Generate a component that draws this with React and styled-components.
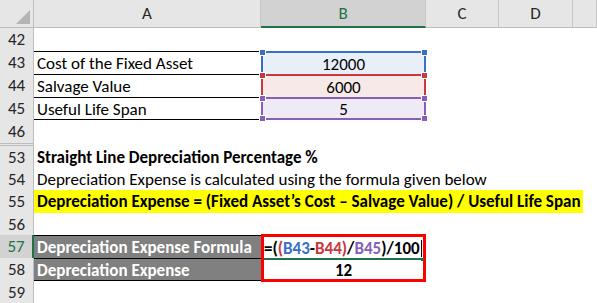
import React from 'react';
import styled, { createGlobalStyle, css } from 'styled-components';

const GlobalStyle = createGlobalStyle`
  html, body { margin: 0; padding: 0; background: #fff; }
  body { font-family: Carlito, Lato, "Open Sans", sans-serif; }
`;

const GREEN = '#217346';

const tones = {
  blue: { line: '#3a6fc4', fill: '#e9eff8' },
  red: { line: '#c8383d', fill: '#f8e9e9' },
  purple: { line: '#8660b8', fill: '#efebf6' },
};

const Sheet = styled.div`
  display: grid;
  grid-template-columns: 34px 227px 165px 73px 74px 1fr;
  grid-template-rows: 28px repeat(5, 23px) 3px 22px 22px 23px 22px 23px 23px 22px;
  width: 597px;
  height: 303px;
  overflow: hidden;
  font-size: 17px;
  color: #000;
`;

const Corner = styled.div`
  background: #e6e6e6;
  border-right: 1px solid #bdbdbd;
  border-bottom: 1px solid #bdbdbd;
  display: flex;
  align-items: flex-end;
  justify-content: flex-end;
  padding: 0 3px 3px 0;
`;

const ColHead = styled.div`
  background: #e6e6e6;
  border-right: 1px solid #c8c8c8;
  border-bottom: 1px solid #bdbdbd;
  display: flex;
  align-items: center;
  justify-content: center;
  color: #262626;
  ${(p) =>
    p.selected &&
    css`
      background: #d2d2d2;
      color: ${GREEN};
      border-bottom: 2px solid ${GREEN};
    `}
`;

const RowHead = styled.div`
  grid-column: 1;
  background: #e6e6e6;
  border-right: 1px solid #bdbdbd;
  display: flex;
  align-items: center;
  justify-content: center;
  color: #262626;
  ${(p) =>
    p.selected &&
    css`
      background: #d2d2d2;
      color: ${GREEN};
      border-right: 2px solid ${GREEN};
    `}
  ${(p) =>
    p.hidden &&
    css`
      border-top: 1px solid #bdbdbd;
      border-bottom: 1px solid #bdbdbd;
    `}
`;

const Blank = styled.div`
  grid-column: ${(p) => p.from || 2} / -1;
`;

const TextCell = styled.div`
  grid-column: 2 / -1;
  display: flex;
  align-items: center;
  padding: 1px 0 0 3px;
  white-space: nowrap;
  font-weight: ${(p) => (p.bold ? 700 : 400)};
`;

const Highlight = styled.span`
  flex-shrink: 0;
  background: #ffff00;
  align-self: stretch;
  display: flex;
  align-items: center;
  margin-left: -3px;
  padding: 0 2px 0 3px;
  margin-top: -1px;
`;

const Label = styled.div`
  grid-column: 2;
  display: flex;
  align-items: center;
  padding: 1px 0 0 3px;
  white-space: nowrap;
  border-top: 1px solid #000;
  margin-right: 2px;
  ${(p) => p.last && css`border-bottom: 1px solid #000;`}
`;

const DarkLabel = styled(Label)`
  background: #808080;
  color: #fff;
  font-weight: 700;
  margin-right: 0;
`;

const DataCell = styled.div`
  grid-column: 3;
  position: relative;
  display: flex;
  align-items: center;
  justify-content: center;
  padding-top: 1px;
  background: ${(p) => tones[p.tone].fill};
  border: 2px solid ${(p) => tones[p.tone].line};
  border-bottom: ${(p) => (p.last ? `2px solid ${tones[p.tone].line}` : 'none')};
`;

const Handle = styled.span`
  position: absolute;
  width: 5px;
  height: 5px;
  border: 1px solid #fff;
  background: ${(p) => tones[p.tone].line};
  ${(p) => (p.bottom ? 'bottom: -4px;' : 'top: -4px;')}
  ${(p) => (p.right ? 'right: -4px;' : 'left: -4px;')}
`;

const ResultBox = styled.div`
  grid-column: 3;
  grid-row: span 2;
  margin: -1px 0 -1px 0;
  border: 3px solid #ff0000;
  display: flex;
  flex-direction: column;
  font-weight: 700;
`;

const FormulaLine = styled.div`
  position: relative;
  height: 20px;
  display: flex;
  align-items: center;
  padding-top: 1px;
  border-bottom: 2px solid ${GREEN};
  white-space: nowrap;
`;

const Caret = styled.span`
  display: inline-block;
  width: 1px;
  height: 17px;
  background: #000;
  margin-left: 1px;
`;

const FillDot = styled.span`
  position: absolute;
  right: -1px;
  bottom: -3px;
  width: 3px;
  height: 3px;
  background: ${GREEN};
`;

const ResultLine = styled.div`
  flex: 1;
  display: flex;
  align-items: center;
  justify-content: center;
`;

const Ref = styled.span`
  color: ${(p) => p.color};
`;

const inputs = [
  { row: 43, label: 'Cost of the Fixed Asset', value: '12000', tone: 'blue' },
  { row: 44, label: 'Salvage Value', value: '6000', tone: 'red' },
  { row: 45, label: 'Useful Life Span', value: '5', tone: 'purple' },
];

export default function App() {
  return (
    <>
      <GlobalStyle />
      <Sheet>
        <Corner>
          <svg width="14" height="14" viewBox="0 0 14 14">
            <polygon points="14,0 14,14 0,14" fill="#b4b4b4" />
          </svg>
        </Corner>
        <ColHead>A</ColHead>
        <ColHead selected>B</ColHead>
        <ColHead>C</ColHead>
        <ColHead>D</ColHead>
        <ColHead />

        <RowHead>42</RowHead>
        <Blank />

        {inputs.map((r, i) => {
          const last = i === inputs.length - 1;
          return (
            <React.Fragment key={r.row}>
              <RowHead>{r.row}</RowHead>
              <Label last={last}>{r.label}</Label>
              <DataCell tone={r.tone} last={last}>
                {r.value}
                <Handle tone={r.tone} />
                <Handle tone={r.tone} right />
                {last && <Handle tone={r.tone} bottom />}
                {last && <Handle tone={r.tone} bottom right />}
              </DataCell>
              <Blank from={4} />
            </React.Fragment>
          );
        })}

        <RowHead>46</RowHead>
        <Blank />

        <RowHead hidden />
        <Blank />

        <RowHead>53</RowHead>
        <TextCell bold>Straight Line Depreciation Percentage %</TextCell>

        <RowHead>54</RowHead>
        <TextCell>Depreciation Expense is calculated using the formula given below</TextCell>

        <RowHead>55</RowHead>
        <TextCell bold>
          <Highlight>
            Depreciation Expense = (Fixed Asset’s Cost – Salvage Value) / Useful Life Span
          </Highlight>
        </TextCell>

        <RowHead>56</RowHead>
        <Blank />

        <RowHead selected>57</RowHead>
        <DarkLabel>Depreciation Expense Formula</DarkLabel>
        <ResultBox>
          <FormulaLine>
            =(
            <Ref color="#c8383d">(</Ref>
            <Ref color={tones.blue.line}>B43</Ref>-
            <Ref color={tones.red.line}>B44</Ref>
            <Ref color="#c8383d">)</Ref>/
            <Ref color={tones.purple.line}>B45</Ref>)/100
            <Caret />
            <FillDot />
          </FormulaLine>
          <ResultLine>12</ResultLine>
        </ResultBox>
        <Blank from={4} />

        <RowHead>58</RowHead>
        <DarkLabel last>Depreciation Expense</DarkLabel>
        <Blank from={4} />

        <RowHead>59</RowHead>
        <Blank />
      </Sheet>
    </>
  );
}
